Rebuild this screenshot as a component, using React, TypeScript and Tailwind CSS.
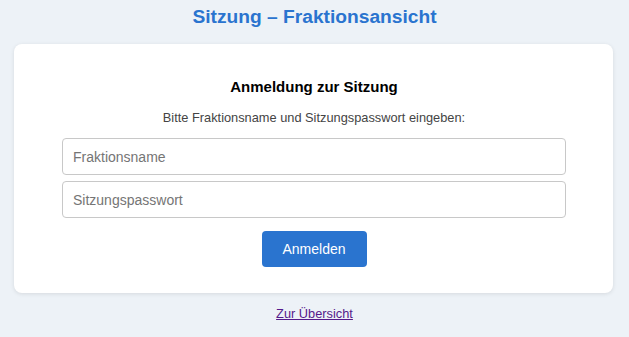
import React from "react";

const App = () => {
  return (
    <div className="min-h-[337px] bg-[#edf2f7] font-['Liberation_Sans',Arial,sans-serif] pt-[6px]">
      <h1 className="text-center text-[19.2px] font-bold leading-[22px] text-[#2a74cf]">
        Sitzung – Fraktionsansicht
      </h1>

      <div className="ml-[14px] mt-[16px] w-[599px] rounded-lg bg-white pb-[26px] pl-[48px] pr-[47px] pt-[34px] shadow-[0_1px_4px_rgba(0,0,0,0.1)]">
        <h2 className="text-center text-[15px] font-bold leading-[18px] text-black">
          Anmeldung zur Sitzung
        </h2>
        <p className="mt-[14px] text-center text-[12.8px] leading-[16px] text-[#444]">
          Bitte Fraktionsname und Sitzungspasswort eingeben:
        </p>

        <div className="mt-[12px] flex flex-col gap-[6px]">
          <input
            type="text"
            placeholder="Fraktionsname"
            className="h-[37px] w-full rounded border border-[#c8c8c8] px-[10px] text-[14px] text-[#333] placeholder:text-[#757575]"
          />
          <input
            type="password"
            placeholder="Sitzungspasswort"
            className="h-[37px] w-full rounded border border-[#c8c8c8] px-[10px] text-[14px] text-[#333] placeholder:text-[#757575]"
          />
        </div>

        <div className="mt-[13px] flex justify-center">
          <button className="h-[36px] w-[105px] rounded bg-[#2a74cf] text-[14px] text-white">
            Anmelden
          </button>
        </div>
      </div>

      <div className="mt-[8px] text-center">
        <a href="#" className="text-[12.8px] text-[#551a8b] underline">
          Zur Übersicht
        </a>
      </div>
    </div>
  );
};

export default App;
